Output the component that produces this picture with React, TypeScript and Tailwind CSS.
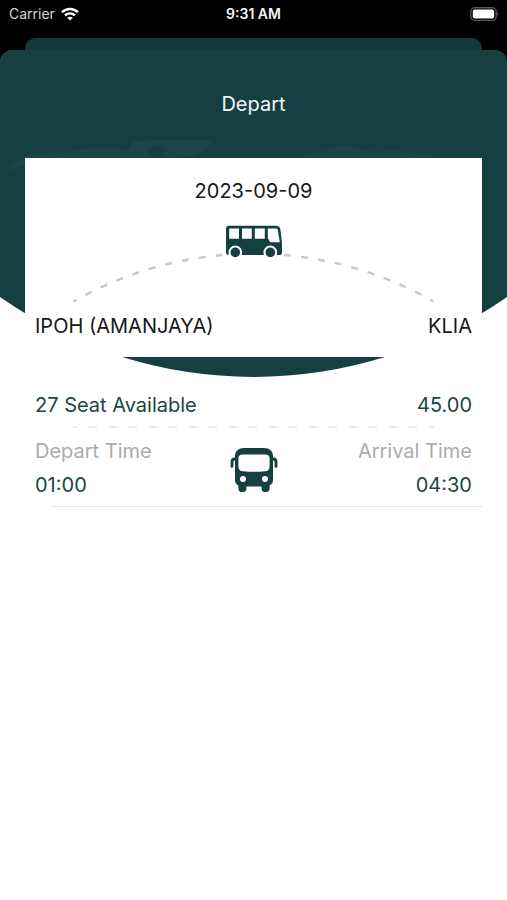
const trip = {
  date: "2023-09-09",
  from: "IPOH (AMANJAYA)",
  to: "KLIA",
  seats: 27,
  price: "45.00",
  departTime: "01:00",
  arrivalTime: "04:30",
};

function StatusBar() {
  return (
    <header className="grid grid-cols-3 items-center h-7 px-[9px] text-white">
      <div className="flex items-center gap-1.5">
        <span className="text-sm text-zinc-300">Carrier</span>
        <svg className="w-[18px] h-[14px]" viewBox="0 0 18 14" fill="none" stroke="#fff" strokeWidth="2.5">
          <path d="M1 5.2C5.6 0.9 12.4 0.9 17 5.2" />
          <path d="M4 8.4C6.9 5.8 11.1 5.8 14 8.4" />
          <path d="M9 13.6L6.2 10.8C7.8 9.4 10.2 9.4 11.8 10.8Z" fill="#fff" stroke="none" />
        </svg>
      </div>
      <span className="text-center text-sm font-semibold text-zinc-100">9:31 AM</span>
      <svg className="justify-self-end w-[30px] h-[15px]" viewBox="0 0 30 15">
        <rect x="2.8" y="0.8" width="25.4" height="12.6" rx="4" fill="none" stroke="#555" strokeWidth="1.4" />
        <rect x="4.8" y="2.6" width="21.4" height="9" rx="2" fill="#fff" />
        <path d="M28.8 5C30.4 5.8 30.4 8.4 28.8 9.2Z" fill="#555" />
      </svg>
    </header>
  );
}

function HeroBackdrop() {
  return (
    <svg
      className="[grid-area:1/1] w-full h-[327px]"
      viewBox="0 0 507 327"
      preserveAspectRatio="none"
      aria-hidden="true"
    >
      <path d="M0 0H507V247A442 442 0 0 1 0 247Z" fill="#153f40" />
      {/* world map, barely visible */}
      <g fill="#1b4546">
        <path d="M6 122L14 112L24 109L27 105L60 103L84 99L112 97L128 101L132 92L150 90H214L206 99L194 106L170 108H25V114L12 119Z" />
        <path d="M292 108L318 103L334 97L344 95L356 99L380 102L392 100L420 104L440 108Z" />
        <path d="M486 154L492 150L496 162L504 170L500 178L490 170Z" opacity="0.4" />
      </g>
      <path d="M148 99C154 94 164 95 166 100L164 107L148 106Z" fill="#173f41" />
    </svg>
  );
}

function RouteArc() {
  return (
    <svg className="block w-full overflow-visible" viewBox="0 0 361 79" aria-hidden="true">
      <path
        d="M0.5 76.5A363 363 0 0 1 360.5 76.5"
        fill="none"
        stroke="#c4cac9"
        strokeWidth="2.4"
        strokeDasharray="7 10.1"
        strokeDashoffset="3.5"
      />
      {/* coach, side view */}
      <path d="M154 26H208V34H154Z" fill="#fff" />
      <path
        d="M156 0.8H203C205.5 0.8 207 2 207.4 4.4L209 18V27C209 28.8 208.2 30 207 30H156C154 30 153 29 153 27V4C153 2 154 0.8 156 0.8Z"
        fill="#153f40"
      />
      <g fill="#fff">
        <path d="M156.2 3.4H166V13.8H156.2Z" />
        <path d="M169 3.4H178.8V13.8H169Z" />
        <path d="M181.8 3.4H191.8V13.8H181.8Z" />
        <path d="M194.8 3.4H203C204 3.4 204.6 3.9 204.8 4.9L206.8 17.2H198.4C197.4 17.2 196.9 16.8 196.4 16L194.8 13Z" />
      </g>
      <g fill="#153f40" stroke="#fff" strokeWidth="2">
        <circle cx="162.3" cy="27.4" r="5.8" />
        <circle cx="197.3" cy="27.4" r="5.8" />
      </g>
    </svg>
  );
}

function BusFront() {
  return (
    <svg className="w-12 h-[46px]" viewBox="0 0 48 46" aria-hidden="true">
      <path
        d="M14 1H34C39.5 1 43 4 43 9V33C43 35.5 41.8 37.5 39.6 38.4V41.6C39.6 43.8 38.4 45 36.4 45H34.6C32.6 45 31.6 43.8 31.6 41.6V39.4H16.4V41.6C16.4 43.8 15.4 45 13.4 45H11.6C9.6 45 8.4 43.8 8.4 41.6V38.4C6.2 37.5 5 35.5 5 33V9C5 4 8.5 1 14 1Z"
        fill="#153f40"
      />
      <path
        d="M13 7.4H35C38 7.4 39.6 8.8 39.6 11.4V19.4C39.6 22.4 38 24 35 24.2C27.6 25 20.4 25 13 24.2C10 24 8.4 22.4 8.4 19.4V11.4C8.4 8.8 10 7.4 13 7.4Z"
        fill="#fff"
      />
      <circle cx="13" cy="32" r="3" fill="#fff" />
      <circle cx="35" cy="32" r="3" fill="#fff" />
      <g fill="none" stroke="#153f40" strokeWidth="2.8" strokeLinecap="round">
        <path d="M6 12H4.6C2.8 12 2 13 2 15V19.4" />
        <path d="M42 12H43.4C45.2 12 46 13 46 15V19.4" />
      </g>
    </svg>
  );
}

export default function App() {
  return (
    <div className="min-h-screen flex flex-col bg-black font-['Inter','Liberation_Sans',sans-serif]">
      <StatusBar />
      <div className="mt-2.5 mx-[25px] h-3 rounded-t-[10px] bg-[#143838]" />

      <main className="grow flex flex-col text-xl leading-7">
        <section className="grid rounded-t-xl overflow-hidden bg-linear-to-b from-[#153f40] from-50% to-white to-50%">
          <HeroBackdrop />
          <div className="[grid-area:1/1] relative pt-10 px-[25px]">
            <h1 className="text-center text-slate-100">Depart</h1>
            <div className="mt-10 pt-[19px] pb-[17px] px-2.5 bg-white text-neutral-900">
              <p className="text-center">{trip.date}</p>
              <div className="mt-5 mx-[38px]">
                <RouteArc />
              </div>
              <div className="mt-2 flex justify-between">
                <span>{trip.from}</span>
                <span>{trip.to}</span>
              </div>
            </div>
          </div>
        </section>

        <div className="grow bg-white">
          <section className="pt-3.5 px-[35px] text-[#1b4643]">
            <div className="flex justify-between">
              <span>{trip.seats} Seat Available</span>
              <span>{trip.price}</span>
            </div>
            <div className="mt-[7px] mx-[38px]">
              <svg className="block w-full h-0.5" aria-hidden="true">
                <line x1="0" y1="1" x2="100%" y2="1" stroke="#ebebeb" strokeWidth="2" strokeDasharray="8 12" strokeDashoffset="4" />
              </svg>
            </div>
            <div className="mt-[9px] grid grid-cols-[1fr_auto_1fr] items-end">
              <dl>
                <dt className="text-[#acacac]">Depart Time</dt>
                <dd className="mt-1.5">{trip.departTime}</dd>
              </dl>
              <div className="pb-1.5">
                <BusFront />
              </div>
              <dl className="text-right">
                <dt className="text-[#acacac]">Arrival Time</dt>
                <dd className="mt-1.5">{trip.arrivalTime}</dd>
              </dl>
            </div>
          </section>
          <hr className="mt-[7px] ml-[50px] mr-[25px] border-neutral-200" />
        </div>
      </main>
    </div>
  );
}
